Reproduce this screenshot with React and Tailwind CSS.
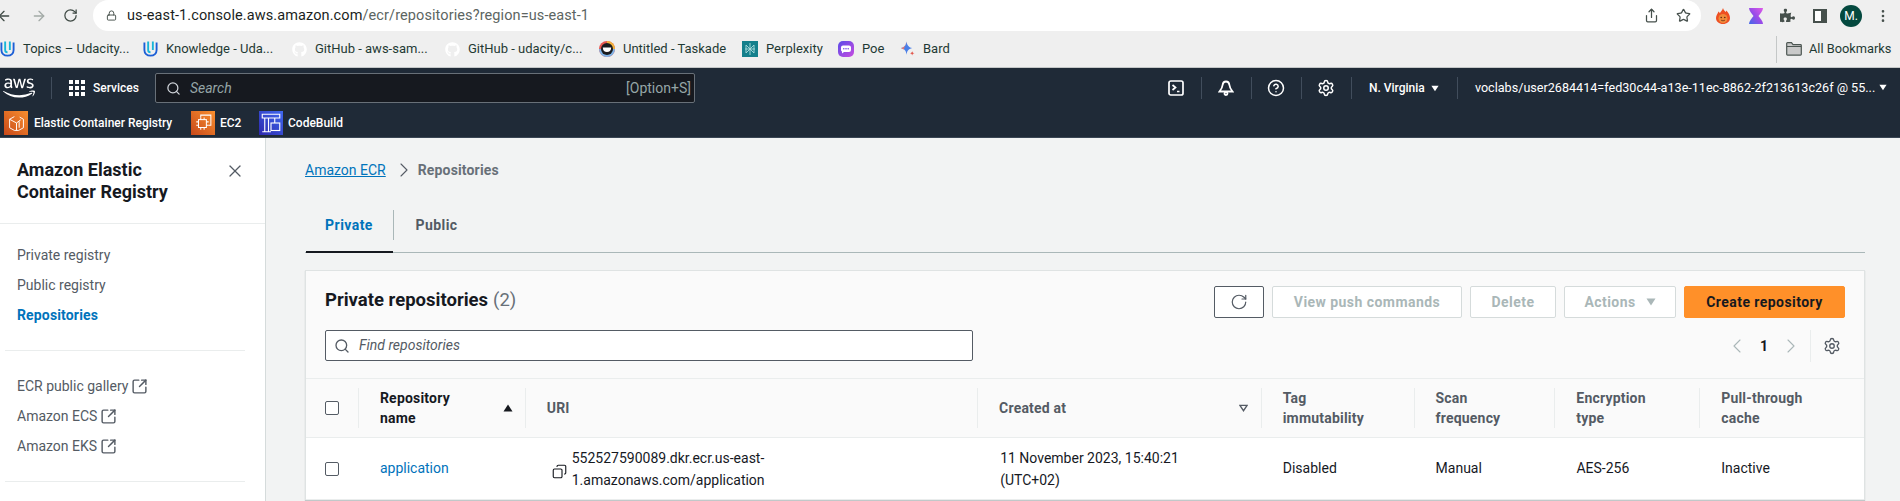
import { ArrowLeft, ArrowRight, RotateCw, Lock, Share, Star, MoreVertical, Search, X, ChevronRight, ChevronLeft, Settings, RotateCw as Refresh, Copy, CircleHelp, SquareArrowOutUpRight } from 'lucide-react'
import { FaAws, FaGithub, FaPuzzlePiece } from 'react-icons/fa'

const sans = 'font-["Roboto",sans-serif]'

function UdacityIcon() {
  return (
    <svg viewBox="0 0 16 18" className="h-[18px] w-[15px] shrink-0" fill="none" strokeWidth="2">
      <path d="M1.500 2v8c0 3.500 2.500 6 6.500 6s6.500-2.500 6.500-6V2" stroke="#1c5fd6" />
      <path d="M5.500 1v9c0 1.500 1 2.500 2.500 2.500M10.500 1v9" stroke="#17b5d8" />
    </svg>
  )
}

function TaskadeIcon() {
  return (
    <svg viewBox="0 0 16 16" className="h-4 w-4 shrink-0">
      <circle cx="8" cy="8" r="8" fill="#e8574f" />
      <path d="M8 0a8 8 0 0 1 8 8h-8z" fill="#f2b33d" />
      <path d="M0 8a8 8 0 0 0 8 8 8 8 0 0 0 8-8z" fill="#7fb4e8" />
      <circle cx="8" cy="8" r="6" fill="#1a1c20" />
      <path d="M3.800 6.500h8.400c0 3-1.800 4.500-4.200 4.500s-4.200-1.500-4.200-4.500z" fill="#fff" />
    </svg>
  )
}

function PerplexityIcon() {
  return (
    <svg viewBox="0 0 16 16" className="h-4 w-4 shrink-0">
      <rect width="16" height="16" fill="#14808c" />
      <path d="M8 2v12M4 4l8 8M12 4l-8 8M4 4v8M12 4v8M3 8h10" stroke="#a9dbdd" strokeWidth="0.900" fill="none" />
    </svg>
  )
}

function PoeIcon() {
  return (
    <svg viewBox="0 0 16 16" className="h-4 w-4 shrink-0">
      <defs>
        <linearGradient id="poeFill" x1="0" y1="0" x2="1" y2="1">
          <stop offset="0" stopColor="#5a4be8" />
          <stop offset="1" stopColor="#c84be0" />
        </linearGradient>
      </defs>
      <rect width="16" height="16" rx="5" fill="url(#poeFill)" />
      <path d="M3 6.500a2 2 0 0 1 2-2h6a2 2 0 0 1 2 2v2.500a2 2 0 0 1-2 2H6l-2 1.500v-2a2 2 0 0 1-1-1.500z" fill="#fff" />
      <circle cx="5.800" cy="7.800" r="0.800" fill="#7a4be8" />
      <circle cx="8" cy="7.800" r="0.800" fill="#7a4be8" />
      <circle cx="10.200" cy="7.800" r="0.800" fill="#7a4be8" />
    </svg>
  )
}

function BardIcon() {
  return (
    <svg viewBox="0 0 16 18" className="h-[18px] w-[15px] shrink-0">
      <path d="M7 1c.6 4 2 6 6 7-4 1-5.400 3-6 7C6.400 11 5 9 1 8c4-1 5.400-3 6-7z" fill="#4a7fe8" />
      <path d="M7 1C6.400 5 5 7 1 8l3 1.500z" fill="#e8776c" />
      <path d="M13 11c.2 1.500.8 2.200 2.500 2.500-1.700.3-2.300 1-2.500 2.500-.2-1.500-.8-2.200-2.500-2.500 1.700-.3 2.300-1 2.500-2.500z" fill="#e2574c" />
    </svg>
  )
}

function FlameIcon() {
  return (
    <svg viewBox="0 0 14 16" className="h-4 w-[14px]">
      <path d="M7 0c.5 2 1.500 2.500 2.500 4 .5-.5.8-1 .8-1.500C12.500 5 14 7 14 10c0 3.500-3 6-7 6s-7-2.500-7-6c0-2.500 1.500-4 2.500-6.500.7.500 1 1.200 1.300 1.800C4.800 3.500 6.500 2 7 0z" fill="#ee4f22" />
      <circle cx="7" cy="10.500" r="4.500" fill="#f0893a" />
      <circle cx="5.200" cy="9.500" r="0.800" fill="#5a2a10" />
      <circle cx="8.800" cy="9.500" r="0.800" fill="#5a2a10" />
      <path d="M5 12c1 1 3 1 4 0" stroke="#5a2a10" strokeWidth="0.700" fill="none" />
    </svg>
  )
}

function HourglassIcon() {
  return (
    <svg viewBox="0 0 14 16" className="h-4 w-[14px]">
      <defs>
        <linearGradient id="glassFill" x1="1" y1="0" x2="0" y2="1">
          <stop offset="0" stopColor="#e05be8" />
          <stop offset="0.500" stopColor="#9a4be8" />
          <stop offset="1" stopColor="#3f6ae8" />
        </linearGradient>
      </defs>
      <path d="M0 0h14c0 3-2.500 5-4.500 8 2 3 4.500 5 4.500 8H0c0-3 2.500-5 4.500-8C2.500 5 0 3 0 0z" fill="url(#glassFill)" />
    </svg>
  )
}

function TerminalIcon() {
  return (
    <svg viewBox="0 0 16 16" className="h-4 w-4" fill="none" stroke="#fff" strokeWidth="1.700">
      <rect x="1" y="1" width="14" height="14" rx="1.800" />
      <path d="M4.500 5l3 2.500-3 2.500M9 11.500h2.500" />
    </svg>
  )
}

function BellIcon() {
  return (
    <svg viewBox="0 0 16 16" className="h-4 w-4" fill="none" stroke="#fff" strokeWidth="1.800">
      <path d="M8 1.500c-2 0-3.200 1.500-3.400 3.500-.2 2.500-1.100 4-3.100 6.500h13c-2-2.500-2.900-4-3.100-6.500C11.200 3 10 1.500 8 1.500z" />
      <circle cx="8" cy="13.500" r="1.500" />
    </svg>
  )
}

function Grid9() {
  return (
    <svg viewBox="0 0 16 16" className="ml-[17px] h-4 w-4 shrink-0" fill="#fff">
      {[0, 6, 12].map((x) => [0, 6, 12].map((y) => <rect key={`${x}-${y}`} x={x} y={y} width="4" height="4" />))}
    </svg>
  )
}

function Caret({ className }) {
  return (
    <svg viewBox="0 0 10 8" className={className}>
      <path d="M0.500 0.500h9L5 7.500z" fill="currentColor" />
    </svg>
  )
}

function FolderIcon() {
  return (
    <svg viewBox="0 0 16 14" className="h-[14px] w-4">
      <path d="M0.700 1.500a.8.8 0 0 1 .8-.8h4l1.500 2h7.500a.8.8 0 0 1 .8.800v8.800a.8.8 0 0 1-.8.8H1.500a.8.8 0 0 1-.8-.8z" fill="#c9c9c9" stroke="#4c5652" strokeWidth="1.200" />
      <path d="M1 4.500h14" stroke="#4c5652" strokeWidth="1" />
    </svg>
  )
}

function EcrTile() {
  return (
    <div className="flex h-6 w-6 shrink-0 items-center justify-center bg-gradient-to-tr from-[#c8481a] to-[#f88f2f]">
      <svg viewBox="0 0 16 16" className="h-[17px] w-[17px]" fill="none" stroke="#fff" strokeWidth="0.900">
        <path d="M6 1.500L1.500 4v8L6 14.500h4L14.500 12V4L11 2M1.500 4L8 7.500l4-3M8 7.500v7M10.500 6v6" />
      </svg>
    </div>
  )
}

function Ec2Tile() {
  return (
    <div className="flex h-6 w-6 shrink-0 items-center justify-center bg-gradient-to-tr from-[#c8481a] to-[#f88f2f]">
      <svg viewBox="0 0 16 16" className="h-[18px] w-[18px]" fill="none" stroke="#fff" strokeWidth="0.900">
        <path d="M6 3V1h9v9h-2" />
        <rect x="4" y="5" width="7" height="7" />
        <path d="M2 7h2M2 10h2M6 12v2M9 12v2M6 3v2M9 3v2M11 7h2M11 10h2" />
      </svg>
    </div>
  )
}

function CodeBuildTile() {
  return (
    <div className="flex h-6 w-6 shrink-0 items-center justify-center bg-gradient-to-tr from-[#2e27ad] to-[#3f68f0]">
      <svg viewBox="0 0 16 16" className="h-5 w-5" fill="none" stroke="#fff" strokeWidth="0.900">
        <path d="M1 1h14v3H1zM3 4v11M6 4v11M1 15h7" />
        <rect x="8" y="8" width="7" height="6" />
        <path d="M11 4v4" />
      </svg>
    </div>
  )
}

function Bookmark({ icon, label, width }) {
  return (
    <div className={`flex shrink-0 items-center gap-[8px] ${width}`}>
      {icon}
      <span className="whitespace-nowrap text-[13px] text-[#1f3a34]">{label}</span>
    </div>
  )
}

function BrowserChrome() {
  return (
    <div className="h-[68px] shrink-0 border-b border-[#c4c7c7] bg-[#efefef]">
      <div className="flex h-[31px]">
        <div className="flex w-[93px] shrink-0 items-center">
          <ArrowLeft size={16} className="ml-[-4px] text-[#3f4a45]" />
          <ArrowRight size={16} className="ml-[19px] text-[#a3aaa7]" />
          <RotateCw size={15} className="ml-[16px] text-[#3f4a45]" />
        </div>
        <div className="flex min-w-0 flex-1 items-center rounded-[16px] bg-white pl-[13px]">
          <Lock size={11} className="shrink-0 text-[#3f4a45]" />
          <span className="ml-[10px] text-[14.5px] tracking-[0.1px] text-[#1b1f1e]">
            us-east-1.console.aws.amazon.com<span className="text-[#5c6562]">/ecr/repositories?region=us-east-1</span>
          </span>
          <div className="ml-auto flex items-center">
            <Share size={15} className="text-[#46504c]" />
            <Star size={15} className="ml-[17px] mr-[10px] text-[#46504c]" />
          </div>
        </div>
        <div className="flex w-[199px] shrink-0 items-center pl-[15px]">
          <FlameIcon />
          <div className="ml-[19px]"><HourglassIcon /></div>
          <FaPuzzlePiece size={15} className="ml-[17px] text-[#46504c]" />
          <div className="ml-[18px] flex h-[14px] w-[14px] justify-start border-2 border-[#46504c] bg-[#46504c]"><div className="h-full w-[6px] bg-white" /></div>
          <div className="ml-[13px] flex h-[22px] w-[22px] items-center justify-center rounded-full bg-[#04493f] text-[12px] text-white">M.</div>
          <MoreVertical size={16} className="ml-[13px] text-[#46504c]" />
        </div>
      </div>
      <div className="flex h-[36px] items-center">
        <Bookmark width="w-[143px]" icon={<UdacityIcon />} label="Topics – Udacity..." />
        <Bookmark width="w-[149px]" icon={<UdacityIcon />} label="Knowledge - Uda..." />
        <Bookmark width="w-[153px]" icon={<FaGithub size={15} className="shrink-0 text-white" />} label="GitHub - aws-sam..." />
        <Bookmark width="w-[154px]" icon={<FaGithub size={15} className="shrink-0 text-white" />} label="GitHub - udacity/c..." />
        <Bookmark width="w-[143px]" icon={<TaskadeIcon />} label="Untitled - Taskade" />
        <Bookmark width="w-[96px]" icon={<PerplexityIcon />} label="Perplexity" />
        <Bookmark width="w-[62px]" icon={<PoeIcon />} label="Poe" />
        <Bookmark width="w-[60px]" icon={<BardIcon />} label="Bard" />
        <div className="ml-auto flex h-[27px] w-[124px] items-center border-l border-[#c4c7c7] pl-[9px]">
          <FolderIcon />
          <span className="ml-[7px] text-[12.800px] text-[#1f3a34]">All Bookmarks</span>
        </div>
      </div>
    </div>
  )
}

function NavIcon({ children }) {
  return <div className="flex h-[22px] w-[50px] items-center justify-center border-r border-[#414d5c]">{children}</div>
}

function AwsNav() {
  return (
    <div className="h-[70px] shrink-0 border-b border-[#3a4654] bg-[#1f2a37] text-white">
      <div className="flex h-[39px] items-center pt-[1px]">
        <div className="flex h-[22px] w-[52px] shrink-0 items-center border-r border-[#414d5c] pl-[3px]">
          <FaAws size={32} />
        </div>
        <Grid9 />
        <span className="ml-[8px] text-[12px] font-medium">Services</span>
        <div className="ml-[16px] flex h-[30px] w-[540px] items-center rounded-[2px] border border-[#687078] bg-[#16191f] pr-[3px] pl-[10px]">
          <Search size={15} className="text-[#d1d5db]" />
          <span className="ml-[9px] text-[14px] italic text-[#95a5a6]">Search</span>
          <span className="ml-auto text-[14px] text-[#95a5a6]">[Option+S]</span>
        </div>
        <div className="ml-[457px] flex items-center">
          <NavIcon><TerminalIcon /></NavIcon>
          <NavIcon><BellIcon /></NavIcon>
          <NavIcon><CircleHelp size={18} strokeWidth={2} /></NavIcon>
          <NavIcon><Settings size={18} strokeWidth={2} /></NavIcon>
          <div className="flex h-[22px] w-[106px] items-center border-r border-[#414d5c] pl-[17px]">
            <span className="text-[12px] font-medium">N. Virginia</span>
            <Caret className="ml-[6px] h-[7px] w-[8px]" />
          </div>
          <div className="flex items-center pl-[17px]">
            <span className="w-[404px] whitespace-nowrap text-[12.600px]">voclabs/user2684414=fed30c44-a13e-11ec-8862-2f213613c26f @ 55...</span>
            <Caret className="h-[7px] w-[8px]" />
          </div>
        </div>
      </div>
      <div className="flex h-[30px] items-center pt-[2px] pl-[4px] text-[12px] font-medium">
        <EcrTile />
        <span className="ml-[6px] w-[157px]">Elastic Container Registry</span>
        <Ec2Tile />
        <span className="ml-[5px] w-[39px]">EC2</span>
        <CodeBuildTile />
        <span className="ml-[5px]">CodeBuild</span>
      </div>
    </div>
  )
}

function SideLink({ children, active }) {
  return (
    <div className={`flex h-[30px] items-center gap-[3px] pl-[17px] text-[14px] ${active ? 'font-bold tracking-[0.15px] text-[#0073bb]' : 'text-[#545b64]'}`}>
      {children}
    </div>
  )
}

function ExternalLink({ label }) {
  return (
    <SideLink>
      {label}
      <SquareArrowOutUpRight size={17} strokeWidth={2} className="text-[#545b64]" />
    </SideLink>
  )
}

function Sidebar() {
  return (
    <aside className="w-[266px] shrink-0 border-r border-[#d5dbdb] bg-white">
      <div className="flex h-[86px] items-start justify-between border-b border-[#eaeded] pt-[21px] pr-[20px] pl-[17px]">
        <h2 className="text-[18px] leading-[22px] font-bold text-[#16191f]">Amazon Elastic<br />Container Registry</h2>
        <X size={20} strokeWidth={1.500} className="mt-[2px] text-[#545b64]" />
      </div>
      <div className="pt-[16px]">
        <SideLink>Private registry</SideLink>
        <SideLink>Public registry</SideLink>
        <SideLink active>Repositories</SideLink>
      </div>
      <div className="mx-[5px] mt-[20px] w-[240px] border-t border-[#eaeded]" />
      <div className="pt-[20px]">
        <ExternalLink label="ECR public gallery" />
        <ExternalLink label="Amazon ECS" />
        <ExternalLink label="Amazon EKS" />
      </div>
      <div className="mx-[5px] mt-[20px] w-[240px] border-t border-[#eaeded]" />
    </aside>
  )
}

function Btn({ children, className }) {
  return <div className={`flex h-[32px] items-center justify-center rounded-[2px] border text-[14px] font-bold tracking-[0.45px] ${className}`}>{children}</div>
}

function HeadCell({ width, children, last }) {
  return (
    <div className={`flex h-[40px] items-center px-[21px] text-[14px] leading-[20px] font-bold tracking-[0.2px] text-[#545b64] ${width} ${last ? '' : 'border-r border-[#eaeded]'}`}>
      {children}
    </div>
  )
}

function Checkbox() {
  return <div className="h-[14px] w-[14px] rounded-[2px] border border-[#545b64] bg-white" />
}

function RepoTable() {
  return (
    <div className="border-t border-[#eaeded]">
      <div className="flex h-[59px] items-center border-b border-[#eaeded] bg-[#fafafa]">
        <div className="flex h-[40px] w-[53px] items-center border-r border-[#eaeded] pl-[19px]"><Checkbox /></div>
        <div className="flex h-[40px] w-[167px] items-center border-r border-[#eaeded] pr-[12px] pl-[21px] text-[14px] leading-[20px] font-bold tracking-[0.2px] text-[#16191f]">
          <span>Repository<br />name</span>
          <Caret className="ml-auto h-[8px] w-[10px] rotate-180 text-[#16191f]" />
        </div>
        <HeadCell width="w-[453px]">URI</HeadCell>
        <HeadCell width="w-[284px]">
          Created at
          <svg viewBox="0 0 10 8" className="mr-[-8px] ml-auto h-[8px] w-[9px]" fill="none" stroke="#545b64" strokeWidth="1.500"><path d="M1 1h8L5 7z" /></svg>
        </HeadCell>
        <HeadCell width="w-[153px]"><span>Tag<br />immutability</span></HeadCell>
        <HeadCell width="w-[141px]"><span>Scan<br />frequency</span></HeadCell>
        <HeadCell width="w-[145px]"><span>Encryption<br />type</span></HeadCell>
        <HeadCell last width="w-[164px]"><span>Pull-through<br />cache</span></HeadCell>
      </div>
      <div className="flex h-[62px] items-center border-b border-[#eaeded] bg-white text-[14px] text-[#16191f]">
        <div className="w-[53px] pl-[19px]"><Checkbox /></div>
        <div className="w-[167px] pl-[21px] text-[#0073bb]">application</div>
        <div className="flex w-[453px] items-center pl-[26px]">
          <Copy size={15} strokeWidth={1.800} className="mt-[6px] shrink-0 -scale-x-100 text-[#16191f]" />
          <span className="ml-[5px] leading-[22px]">552527590089.dkr.ecr.us-east-<br />1.amazonaws.com/application</span>
        </div>
        <div className="w-[284px] pl-[22px] leading-[22px]">11 November 2023, 15:40:21<br />(UTC+02)</div>
        <div className="w-[153px] pl-[21px]">Disabled</div>
        <div className="w-[141px] pl-[21px]">Manual</div>
        <div className="w-[145px] pl-[21px]">AES-256</div>
        <div className="w-[164px] pl-[21px]">Inactive</div>
      </div>
    </div>
  )
}

function Panel() {
  return (
    <div className="mt-[17px] w-[1560px] border-t border-r border-l border-[#dfe3e3] bg-[#fafafa] shadow-[0_1px_1px_rgba(0,28,36,0.2)]">
      <div className="flex h-[107px]">
        <div className="flex-1 pt-[14px] pl-[19px]">
          <div className="flex h-[32px] items-center text-[18.500px] font-bold text-[#16191f]">
            Private repositories<span className="ml-[5px] font-normal text-[#687078]">(2)</span>
          </div>
          <div className="mt-[13px] flex h-[31px] w-[648px] items-center rounded-[2px] border border-[#545b64] bg-white pl-[8px]">
            <Search size={16} className="text-[#545b64]" />
            <span className="ml-[9px] text-[14px] italic text-[#545b64]">Find repositories</span>
          </div>
        </div>
        <div className="w-[651px] pt-[15px] pr-[19px]">
          <div className="flex justify-end gap-[8px]">
            <Btn className="w-[50px] border-[#545b64] bg-white text-[#545b64]"><Refresh size={18} strokeWidth={1.600} /></Btn>
            <Btn className="w-[190px] border-[#d5dbdb] bg-white text-[#aab7b8]">View push commands</Btn>
            <Btn className="w-[86px] border-[#d5dbdb] bg-white text-[#aab7b8]">Delete</Btn>
            <Btn className="w-[112px] gap-[10px] border-[#d5dbdb] bg-white text-[#aab7b8]">Actions<Caret className="h-[8px] w-[10px]" /></Btn>
            <Btn className="w-[161px] border-[#ff9029] bg-[#ff9029] text-[#16191f]">Create repository</Btn>
          </div>
          <div className="mt-[12px] flex h-[32px] items-center justify-end pr-[4px]">
            <ChevronLeft size={24} strokeWidth={1.100} className="text-[#aab7b8]" />
            <span className="mx-[11px] text-[14px] font-bold text-[#16191f]">1</span>
            <ChevronRight size={24} strokeWidth={1.100} className="text-[#aab7b8]" />
            <div className="mr-[12px] ml-[7px] h-[32px] border-l border-[#eaeded]" />
            <Settings size={18} strokeWidth={1.800} className="text-[#545b64]" />
          </div>
        </div>
      </div>
      <RepoTable />
    </div>
  )
}

function Content() {
  return (
    <main className="min-w-0 flex-1 bg-[#f2f3f3] pl-[39px]">
      <div className="flex h-[64px] items-center text-[14px]">
        <span className="text-[#0073bb] underline">Amazon ECR</span>
        <ChevronRight size={24} strokeWidth={1.100} className="mr-[2px] ml-[6px] text-[#545b64]" />
        <span className="font-bold tracking-[0.15px] text-[#687078]">Repositories</span>
      </div>
      <div className="flex h-[51px] w-[1560px] border-b border-[#aab7b8]">
        <div className="relative flex h-[50px] w-[88px] items-center justify-center pb-[4px] text-[14px] font-bold tracking-[0.45px] text-[#0073bb]">
          Private
          <div className="absolute right-0 bottom-[-1px] left-[1px] h-[2px] bg-[#16191f]" />
        </div>
        <div className="flex h-[50px] items-start pt-[8px]">
          <div className="flex h-[30px] w-[86px] items-center justify-center border-l border-[#aab7b8] text-[14px] font-bold tracking-[0.45px] text-[#545b64]">Public</div>
        </div>
      </div>
      <Panel />
    </main>
  )
}

export default function App() {
  return (
    <div className={`flex h-[501px] w-[1900px] flex-col overflow-hidden ${sans}`}>
      <BrowserChrome />
      <AwsNav />
      <div className="flex min-h-0 flex-1">
        <Sidebar />
        <Content />
      </div>
    </div>
  )
}
